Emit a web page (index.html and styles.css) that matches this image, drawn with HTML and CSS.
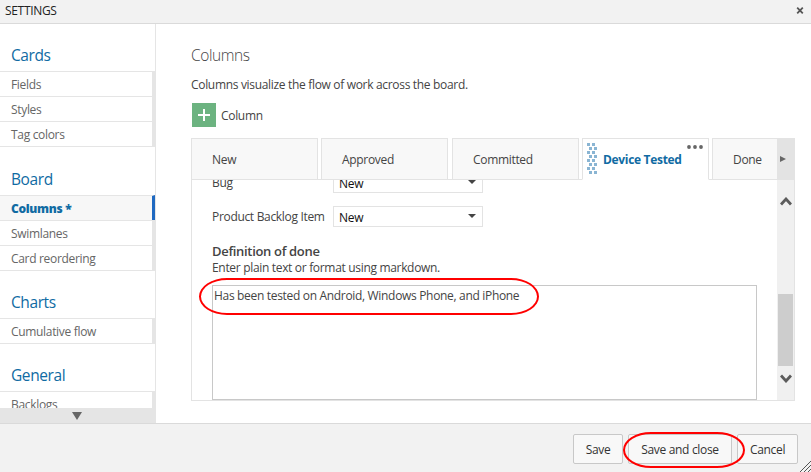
FILE: index.html
```
<!DOCTYPE html>
<html lang="en">
<head>
<meta charset="utf-8">
<title>Settings</title>
<link rel="stylesheet" href="styles.css">
</head>
<body>
<div class="dialog">
  <header class="titlebar">
    <span class="titlebar-text">SETTINGS</span>
    <svg class="close" width="8" height="7" viewBox="0 0 8 7"><path d="M1.2 .7 6.8 6.3M6.8 .7 1.2 6.3" stroke="#555" stroke-width="1.8"/></svg>
  </header>

  <div class="content">
    <nav class="sidebar">
      <div class="sidebar-list">
        <h2>Cards</h2>
        <ul>
          <li>Fields</li>
          <li>Styles</li>
          <li>Tag colors</li>
        </ul>
        <h2 class="board">Board</h2>
        <ul>
          <li class="selected">Columns *</li>
          <li>Swimlanes</li>
          <li>Card reordering</li>
        </ul>
        <h2>Charts</h2>
        <ul>
          <li>Cumulative flow</li>
        </ul>
        <h2>General</h2>
        <ul>
          <li>Backlogs</li>
        </ul>
      </div>
      <div class="sidebar-more"><svg width="10" height="8" viewBox="0 0 10 8"><path d="M0 0h10L5 8z" fill="#666"/></svg></div>
    </nav>

    <main class="main">
      <h1>Columns</h1>
      <p class="intro">Columns visualize the flow of work across the board.</p>
      <div class="add">
        <svg width="24" height="24" viewBox="0 0 24 24"><path fill="#6cb380" d="M0 0h24v24H0z"/><path d="M6 12h12M12 6v12" stroke="#fff" stroke-width="2"/></svg>
        <span class="add-label">Column</span>
      </div>

      <div class="tabs">
        <div class="tab">New</div>
        <div class="tab">Approved</div>
        <div class="tab committed">Committed</div>
        <div class="tab active">
          <svg class="grip" width="10" height="32" viewBox="0 0 10 32">
            <defs><pattern id="dots" width="10" height="8" patternUnits="userSpaceOnUse"><path fill="#8ab5d3" d="M0 0h3v3H0zM5 0h3v3H5zM2 4h3v3H2zM7 4h3v3H7z"/></pattern></defs>
            <path fill="url(#dots)" d="M0 0h10v32H0z"/>
          </svg>
          <span class="tab-name">Device Tested</span>
          <svg class="more" width="16" height="4" viewBox="0 0 16 4"><g fill="#666"><circle cx="2" cy="2" r="1.9"/><circle cx="8" cy="2" r="1.9"/><circle cx="14" cy="2" r="1.9"/></g></svg>
        </div>
        <div class="tab last">Done</div>
        <div class="tab-next"><svg width="6" height="6" viewBox="0 0 6 6"><path d="M0 0 6 3 0 6z" fill="#666"/></svg></div>
      </div>

      <div class="panel">
        <div class="panel-body">
          <div class="row"><label>Bug</label><div class="select">New<svg width="8" height="4" viewBox="0 0 8 4"><path d="M0 0h8L4 4z" fill="#444"/></svg></div></div>
          <div class="row"><label>Product Backlog Item</label><div class="select">New<svg width="8" height="4" viewBox="0 0 8 4"><path d="M0 0h8L4 4z" fill="#444"/></svg></div></div>
          <h3>Definition of done</h3>
          <p class="hint">Enter plain text or format using markdown.</p>
          <div class="editor">Has been tested on Android, Windows Phone, and iPhone</div>
        </div>
        <div class="scrollbar">
          <svg class="up" width="12" height="9" viewBox="0 0 12 9"><path d="M1 7.5 6 2l5 5.5" fill="none" stroke="#5c5c5c" stroke-width="2.8"/></svg>
          <div class="thumb"></div>
          <svg class="down" width="12" height="9" viewBox="0 0 12 9"><path d="M1 1.5 6 7l5-5.5" fill="none" stroke="#5c5c5c" stroke-width="2.8"/></svg>
        </div>
      </div>
    </main>
  </div>

  <footer class="footer">
    <div class="button save">Save</div>
    <div class="button save-close">Save and close</div>
    <div class="button cancel">Cancel</div>
    <svg class="resize" width="11" height="11" viewBox="0 0 11 11"><path d="M0 11 11 0M4 11 11 4M8 11 11 8" stroke="#555" stroke-width="1"/></svg>
  </footer>

  <div class="ring ring-text"></div>
  <div class="ring ring-button"></div>
</div>
</body>
</html>
```
FILE: styles.css
```
* { box-sizing: border-box; }
body { margin: 0; font: 12px/16px "Open Sans", "Noto Sans", sans-serif; letter-spacing: -.32px; color: #444; white-space: nowrap; }
h1, h2, h3, p, ul { margin: 0; padding: 0; font-weight: 400; }
ul { list-style: none; }
svg { display: block; flex: none; }

.dialog { position: relative; width: 811px; height: 472px; overflow: hidden; background: #fff; display: flex; flex-direction: column; }

.titlebar { height: 24px; flex: none; display: flex; align-items: center; justify-content: space-between; padding: 0 7px 3px 5px; background: #f2f2f2; border-bottom: 1px solid #dadada; color: #222; }
.titlebar-text { padding-top: 2px; }

.content { height: 399px; display: flex; }

.sidebar { width: 156px; flex: none; display: flex; flex-direction: column; border-right: 1px solid #e5e5e5; }
.sidebar-list { height: 384px; overflow: hidden; }
.sidebar h2 { height: 47px; padding: 20px 0 0 11px; font-size: 15.5px; line-height: 22px; letter-spacing: -.4px; color: #106ba3; }
.sidebar h2.board { height: 48px; padding-top: 21px; }
.sidebar ul { border-bottom: 1px solid #e5e5e5; }
.sidebar li { height: 25px; padding: 5px 0 0 11px; border-top: 1px solid #e5e5e5; border-right: 3px solid #e5e5e5; color: #666; }
.sidebar li.selected { background: #f7f7f7; border-right-color: #1f69c1; color: #106ba3; font-weight: 800; }
.sidebar-more { height: 15px; width: 156px; padding-right: 3px; display: flex; justify-content: center; align-items: center; background: #e5e5e5; }

.main { flex: 1; padding: 20px 16px 0 35px; }
.main h1 { font-size: 15.5px; line-height: 22px; font-weight: 300; letter-spacing: -.4px; }
.intro { margin-top: 11px; }
.add { display: flex; align-items: center; gap: 5px; margin: 10px 0 11px 1px; }
.add-label { padding-top: 2px; }

.tabs { height: 42px; width: 604px; display: flex; gap: 3px; box-shadow: inset 0 -1px #e3e3e3; }
.tab { width: 127px; flex: none; padding: 13px 0 0 20px; background: #f8f8f8; border: 1px solid #e3e3e3; }
.tab.committed { margin-left: 1px; }
.tab.active { display: flex; padding: 0; background: #fff; border-bottom-color: #fff; color: #106ba3; font-weight: 700; }
.tab-name { margin: 13px 0 0 6px; }
.grip { margin: 4px 0 0 4px; }
.more { margin: 6px 0 0 5px; }
.tab.last { width: 65px; border-right: 0; }
.tab-next { width: 18px; margin-left: -3px; padding: 18px 0 0 3px; background: #e3e3e3; }

.panel { width: 604px; height: 221px; display: flex; border: solid #e3e3e3; border-width: 0 1px 1px; }
.panel-body { width: 585px; padding-left: 20px; overflow: hidden; }
.row { display: flex; align-items: center; height: 21px; margin-bottom: 13px; }
.row:first-child { margin-top: -8px; }
.row label { width: 121px; padding-top: 1px; }
.select { width: 150px; height: 21px; display: flex; justify-content: space-between; padding: 3px 6px 0 5px; border: 1px solid #e3e3e3; color: #111; }
.select svg { margin-top: 4px; }
.panel h3 { margin: 16px 0 1px; font-size: 13px; font-weight: 600; }
.editor { width: 545px; height: 115px; margin-top: 9px; padding: 2px 0 0 1px; border: 1px solid #c8c8c8; }
.scrollbar { width: 17px; height: 220px; display: flex; flex-direction: column; align-items: center; background: #f0f0f0; }
.up { margin: 17px 0 88px; }
.thumb { width: 15px; height: 72px; background: #cdcdcd; }
.down { margin-top: 8px; }

.footer { position: relative; height: 49px; display: flex; gap: 5px; padding: 10px 13px 0 0; justify-content: flex-end; background: #f2f2f2; border-top: 1px solid #dadada; }
.button { height: 30px; padding-top: 7px; text-align: center; background: #f8f8f8; border: 1px solid #c8c8c8; border-radius: 2px; color: #333; }
.save { width: 50px; }
.save-close { width: 104px; }
.cancel { width: 61px; }
.resize { position: absolute; right: 0; bottom: 0; }

.ring { position: absolute; border: 2px solid #f00; }
.ring-text { left: 199px; top: 278px; width: 340px; height: 37px; border-radius: 28px / 18.5px; }
.ring-button { left: 623px; top: 432px; width: 122px; height: 36px; border-radius: 28px / 18px; }
```
